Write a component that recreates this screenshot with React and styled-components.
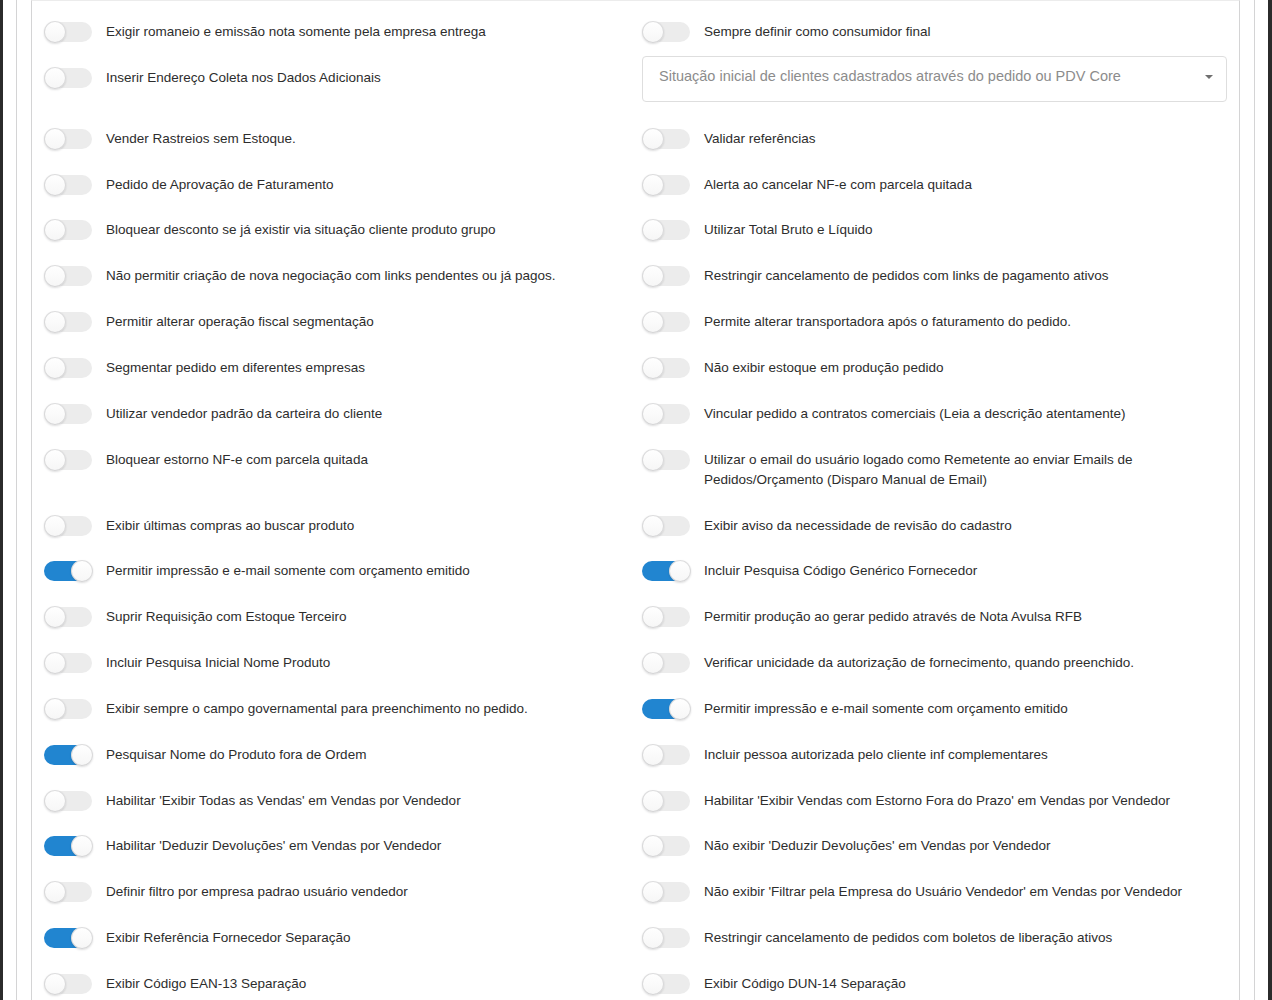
import React, { useState } from 'react';
import styled, { createGlobalStyle } from 'styled-components';

const GlobalStyle = createGlobalStyle`
  html, body {
    margin: 0;
    padding: 0;
    background: #ffffff;
  }
  body {
    font-family: 'Liberation Sans', Arial, sans-serif;
    color: #2d2d2d;
  }
`;

const Frame = styled.div`
  border-left: 3px solid #2b2b2b;
  border-right: 4px solid #2b2b2b;
  padding: 0 13px;
  min-height: 100vh;
  box-sizing: border-box;
  display: flex;
`;

const Panel = styled.div`
  flex: 1;
  border-left: 1px solid #d4d4d5;
  border-right: 1px solid #d4d4d5;
  padding: 0 14px;
  display: flex;
`;

const Card = styled.div`
  flex: 1;
  border: 1px solid #d4d4d5;
  border-bottom: none;
  border-top-color: #ececec;
  padding: 8px 12px 0;
  display: grid;
  grid-template-columns: 1fr 1fr;
  column-gap: 13px;
  align-content: start;
`;

const Cell = styled.div`
  display: flex;
  align-items: flex-start;
  padding: ${p => (p.$select ? '1px 0 14px' : '12.93px 0')};
  min-width: 0;
`;

const Track = styled.button`
  position: relative;
  flex: none;
  width: 48px;
  height: 20px;
  margin: 0 14px 0 0;
  padding: 0;
  border: none;
  border-radius: 10px;
  background: ${p => (p.$on ? '#2185d0' : '#ececec')};
  cursor: pointer;
  outline: none;
`;

const Knob = styled.span`
  position: absolute;
  top: -1px;
  left: ${p => (p.$on ? '27px' : '0')};
  width: 22px;
  height: 22px;
  box-sizing: border-box;
  border-radius: 50%;
  background: linear-gradient(#ffffff, #f6f6f6);
  box-shadow: 0 1px 2px 0 rgba(34, 36, 38, 0.15), 0 0 0 1px rgba(34, 36, 38, 0.15) inset;
`;

const Label = styled.span`
  font-size: 13.5px;
  line-height: 20px;
  color: #2d2d2d;
`;

const SelectBox = styled.div`
  flex: 1;
  height: 46px;
  box-sizing: border-box;
  border: 1px solid #dedede;
  border-radius: 4px;
  padding: 0 13px 5px 16px;
  display: flex;
  align-items: center;
  justify-content: space-between;
  font-size: 14.5px;
  color: #8c8c8c;
  cursor: pointer;
`;

const Caret = styled.span`
  width: 0;
  height: 0;
  border-left: 4px solid transparent;
  border-right: 4px solid transparent;
  border-top: 4px solid #6f6f6f;
  margin-top: 2px;
`;

const rows = [
  ['Exigir romaneio e emissão nota somente pela empresa entrega', false, 'Sempre definir como consumidor final', false],
  ['Inserir Endereço Coleta nos Dados Adicionais', false, null, false],
  ['Vender Rastreios sem Estoque.', false, 'Validar referências', false],
  ['Pedido de Aprovação de Faturamento', false, 'Alerta ao cancelar NF-e com parcela quitada', false],
  ['Bloquear desconto se já existir via situação cliente produto grupo', false, 'Utilizar Total Bruto e Líquido', false],
  ['Não permitir criação de nova negociação com links pendentes ou já pagos.', false, 'Restringir cancelamento de pedidos com links de pagamento ativos', false],
  ['Permitir alterar operação fiscal segmentação', false, 'Permite alterar transportadora após o faturamento do pedido.', false],
  ['Segmentar pedido em diferentes empresas', false, 'Não exibir estoque em produção pedido', false],
  ['Utilizar vendedor padrão da carteira do cliente', false, 'Vincular pedido a contratos comerciais (Leia a descrição atentamente)', false],
  ['Bloquear estorno NF-e com parcela quitada', false, 'Utilizar o email do usuário logado como Remetente ao enviar Emails de Pedidos/Orçamento (Disparo Manual de Email)', false],
  ['Exibir últimas compras ao buscar produto', false, 'Exibir aviso da necessidade de revisão do cadastro', false],
  ['Permitir impressão e e-mail somente com orçamento emitido', true, 'Incluir Pesquisa Código Genérico Fornecedor', true],
  ['Suprir Requisição com Estoque Terceiro', false, 'Permitir produção ao gerar pedido através de Nota Avulsa RFB', false],
  ['Incluir Pesquisa Inicial Nome Produto', false, 'Verificar unicidade da autorização de fornecimento, quando preenchido.', false],
  ['Exibir sempre o campo governamental para preenchimento no pedido.', false, 'Permitir impressão e e-mail somente com orçamento emitido', true],
  ['Pesquisar Nome do Produto fora de Ordem', true, 'Incluir pessoa autorizada pelo cliente inf complementares', false],
  ["Habilitar 'Exibir Todas as Vendas' em Vendas por Vendedor", false, "Habilitar 'Exibir Vendas com Estorno Fora do Prazo' em Vendas por Vendedor", false],
  ["Habilitar 'Deduzir Devoluções' em Vendas por Vendedor", true, "Não exibir 'Deduzir Devoluções' em Vendas por Vendedor", false],
  ['Definir filtro por empresa padrao usuário vendedor', false, "Não exibir 'Filtrar pela Empresa do Usuário Vendedor' em Vendas por Vendedor", false],
  ['Exibir Referência Fornecedor Separação', true, 'Restringir cancelamento de pedidos com boletos de liberação ativos', false],
  ['Exibir Código EAN-13 Separação', false, 'Exibir Código DUN-14 Separação', false],
];

const Toggle = ({ label, initial }) => {
  const [on, setOn] = useState(initial);
  return (
    <Cell>
      <Track type="button" $on={on} onClick={() => setOn(!on)}>
        <Knob $on={on} />
      </Track>
      <Label>{label}</Label>
    </Cell>
  );
};

const App = () => {
  return (
    <>
      <GlobalStyle />
      <Frame>
        <Panel>
          <Card>
            {rows.map(([left, leftOn, right, rightOn], i) => (
              <React.Fragment key={i}>
                <Toggle label={left} initial={leftOn} />
                {right ? (
                  <Toggle label={right} initial={rightOn} />
                ) : (
                  <Cell $select>
                    <SelectBox>
                      <span>Situação inicial de clientes cadastrados através do pedido ou PDV Core</span>
                      <Caret />
                    </SelectBox>
                  </Cell>
                )}
              </React.Fragment>
            ))}
          </Card>
        </Panel>
      </Frame>
    </>
  );
};

export default App;
